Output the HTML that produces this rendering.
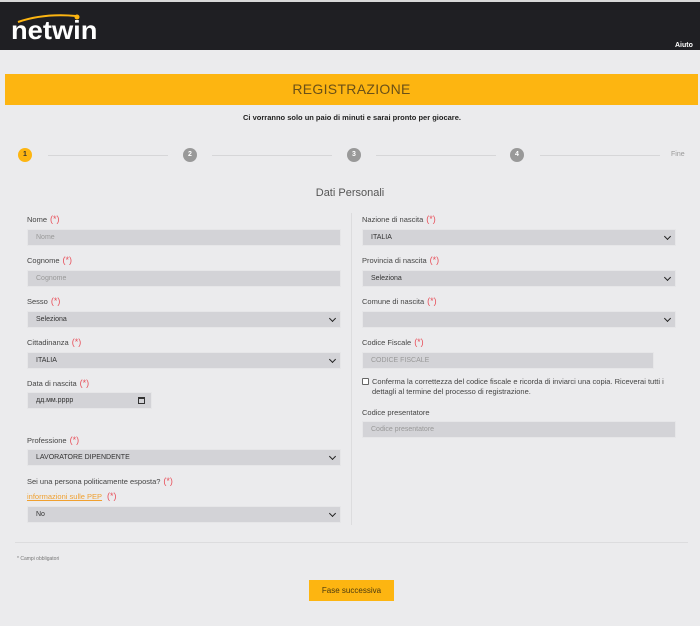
<!DOCTYPE html>
<html><head><meta charset="utf-8"><style>
*{margin:0;padding:0;box-sizing:border-box}
body{width:700px;height:626px;background:#ebebed;font-family:"Liberation Sans",sans-serif;position:relative;overflow:hidden;color:#333}
.a{position:absolute}
.hdr{left:0;top:0;width:700px;height:50px;background:#1f1f23;border-top:2px solid #d8d8d8}
.lbl{font-size:7.5px;color:#444}
.lbl b{color:#e8505b;font-weight:normal;font-size:9px;margin-left:3px}
.inp{height:17px;background:#d3d3d7;border:1px solid #e6e6e8;font-size:7px;color:#999;padding-left:8px;line-height:16px}
.sel{color:#333}
.sel:after{content:"";position:absolute;right:5px;top:4px;width:4px;height:4px;border-right:1.5px solid #222;border-bottom:1.5px solid #222;transform:rotate(45deg)}
.c{width:14px;height:14px;border-radius:50%;background:#999;color:#fff;font-size:7px;font-weight:bold;text-align:center;line-height:14px}
.ln{height:1px;background:#d6d6d8}
</style></head><body>
<div class="a hdr"></div>
<div class="a" style="left:11px;top:15px;font-size:26px;font-weight:bold;color:#fff;letter-spacing:0px;transform:scaleX(1.05);transform-origin:left">netwin</div>
<svg class="a" style="left:12px;top:11px" width="70" height="12"><path d="M6 11 Q32 2 64 5" stroke="#fdb511" stroke-width="2" fill="none"/><circle cx="65" cy="6" r="2.5" fill="#fdb511"/></svg>
<div class="a" style="left:675px;top:42px;font-size:7px;font-weight:bold;color:#fff">Aiuto</div>
<div class="a" style="left:5px;top:74px;width:693px;height:31px;background:#fdb511;text-align:center;font-size:14px;line-height:31px;color:#6a5018;letter-spacing:0.3px">REGISTRAZIONE</div>
<div class="a" style="left:0;top:113px;width:704px;text-align:center;font-size:7.5px;font-weight:bold;color:#222">Ci vorranno solo un paio di minuti e sarai pronto per giocare.</div>
<div class="a c" style="left:18px;top:148px;background:#fdb511;color:#333">1</div>
<div class="a c" style="left:183px;top:148px">2</div>
<div class="a c" style="left:347px;top:148px">3</div>
<div class="a c" style="left:510px;top:148px">4</div>
<div class="a ln" style="left:48px;top:155px;width:120px"></div>
<div class="a ln" style="left:212px;top:155px;width:120px"></div>
<div class="a ln" style="left:376px;top:155px;width:120px"></div>
<div class="a ln" style="left:540px;top:155px;width:120px"></div>
<div class="a" style="left:671px;top:151px;font-size:7px;color:#999">Fine</div>
<div class="a" style="left:0;top:187px;width:700px;text-align:center;font-size:11px;color:#555">Dati Personali</div>
<div class="a" style="left:351px;top:213px;width:1px;height:312px;background:#dcdcde"></div>

<div class="a lbl" style="left:27px;top:214px">Nome<b>(*)</b></div>
<div class="a inp" style="left:27px;top:229px;width:314px">Nome</div>
<div class="a lbl" style="left:27px;top:255px">Cognome<b>(*)</b></div>
<div class="a inp" style="left:27px;top:270px;width:314px">Cognome</div>
<div class="a lbl" style="left:27px;top:296px">Sesso<b>(*)</b></div>
<div class="a inp sel" style="left:27px;top:311px;width:314px">Seleziona</div>
<div class="a lbl" style="left:27px;top:337px">Cittadinanza<b>(*)</b></div>
<div class="a inp sel" style="left:27px;top:352px;width:314px">ITALIA</div>
<div class="a lbl" style="left:27px;top:378px">Data di nascita<b>(*)</b></div>
<div class="a inp" style="left:27px;top:392px;width:125px;color:#333">дд.мм.рррр<span style="position:absolute;right:6px;top:4px;width:7px;height:7px;border:1px solid #333;border-top-width:2px"></span></div>
<div class="a lbl" style="left:27px;top:435px">Professione<b>(*)</b></div>
<div class="a inp sel" style="left:27px;top:449px;width:314px">LAVORATORE DIPENDENTE</div>
<div class="a lbl" style="left:27px;top:476px">Sei una persona politicamente esposta?<b>(*)</b></div>
<div class="a lbl" style="left:27px;top:491px"><span style="color:#f0a030;text-decoration:underline">informazioni sulle PEP</span><b style="margin-left:5px">(*)</b></div>
<div class="a inp sel" style="left:27px;top:506px;width:314px">No</div>

<div class="a lbl" style="left:362px;top:214px">Nazione di nascita<b>(*)</b></div>
<div class="a inp sel" style="left:362px;top:229px;width:314px">ITALIA</div>
<div class="a lbl" style="left:362px;top:255px">Provincia di nascita<b>(*)</b></div>
<div class="a inp sel" style="left:362px;top:270px;width:314px">Seleziona</div>
<div class="a lbl" style="left:362px;top:296px">Comune di nascita<b>(*)</b></div>
<div class="a inp sel" style="left:362px;top:311px;width:314px"></div>
<div class="a lbl" style="left:362px;top:337px">Codice Fiscale<b>(*)</b></div>
<div class="a inp" style="left:362px;top:352px;width:292px">CODICE FISCALE</div>
<div class="a" style="left:362px;top:378px;width:7px;height:7px;border:1px solid #666;background:#fff;border-radius:1px"></div>
<div class="a lbl" style="left:372px;top:377px;line-height:10px;width:310px">Conferma la correttezza del codice fiscale e ricorda di inviarci una copia. Riceverai tutti i dettagli al termine del processo di registrazione.</div>
<div class="a lbl" style="left:362px;top:408px">Codice presentatore</div>
<div class="a inp" style="left:362px;top:421px;width:314px">Codice presentatore</div>

<div class="a" style="left:15px;top:542px;width:673px;height:1px;background:#dcdcde"></div>
<div class="a" style="left:17px;top:556px;font-size:5px;color:#777">* Campi obbligatori</div>
<div class="a" style="left:309px;top:580px;width:85px;height:21px;background:#fdb511;font-size:8px;color:#4a3a10;text-align:center;line-height:21px">Fase successiva</div>
</body></html>
